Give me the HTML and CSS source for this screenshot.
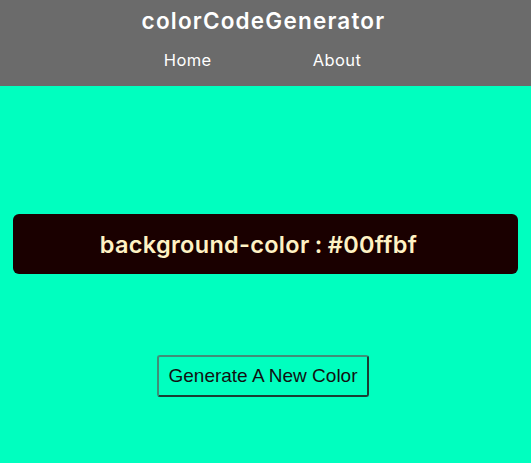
FILE: index.html
```
<!DOCTYPE html>
<html>
<head>
<meta charset="utf-8">
<link rel="stylesheet" href="styles.css">
</head>
<body>
<header class="header">
  <h1 class="title">colorCodeGenerator</h1>
  <nav class="nav">
    <a class="nav-link" href="#">Home</a>
    <a class="nav-link" href="#">About</a>
  </nav>
</header>
<main class="main">
  <div class="code-box">background-color : #00ffbf</div>
  <button class="gen-btn">Generate A New Color</button>
</main>
</body>
</html>
```
FILE: styles.css
```
html, body {
  margin: 0;
  padding: 0;
}
body {
  background: #00ffbf;
  font-family: Inter, "DejaVu Sans", sans-serif;
  min-height: 463px;
}
.header {
  background: #6b6b6b;
  height: 86px;
  display: flex;
  flex-direction: column;
  align-items: center;
  box-sizing: border-box;
  padding-top: 7px;
}
.title {
  margin: 0 0 0 -4px;
  color: #ffffff;
  font-size: 22.5px;
  font-weight: 600;
  letter-spacing: 1.2px;
  line-height: 28px;
}
.nav {
  display: flex;
  gap: 101px;
  margin-top: 14px;
  margin-left: -6px;
}
.nav-link {
  color: #ffffff;
  text-decoration: none;
  font-size: 16.5px;
  letter-spacing: 0.4px;
  line-height: 22px;
}
.main {
  display: flex;
  flex-direction: column;
  align-items: center;
  padding: 128px 13px 0;
}
.code-box {
  align-self: stretch;
  box-sizing: border-box;
  height: 60px;
  padding-right: 14px;
  background: #1a0000;
  border-radius: 6px;
  color: #fff2c4;
  font-size: 23.5px;
  font-weight: 600;
  letter-spacing: 0.3px;
  word-spacing: -1px;
  display: flex;
  align-items: center;
  justify-content: center;
}
.gen-btn {
  margin-top: 81px;
  margin-left: -5px;
  background: transparent;
  border: 2px solid;
  border-color: #3f8f78 #1a3d33 #1a3d33 #3f8f78;
  border-radius: 3px;
  font-family: "Liberation Sans", Arial, sans-serif;
  font-size: 19px;
  color: #111;
  padding: 0 9px;
  height: 42px;
}
```
